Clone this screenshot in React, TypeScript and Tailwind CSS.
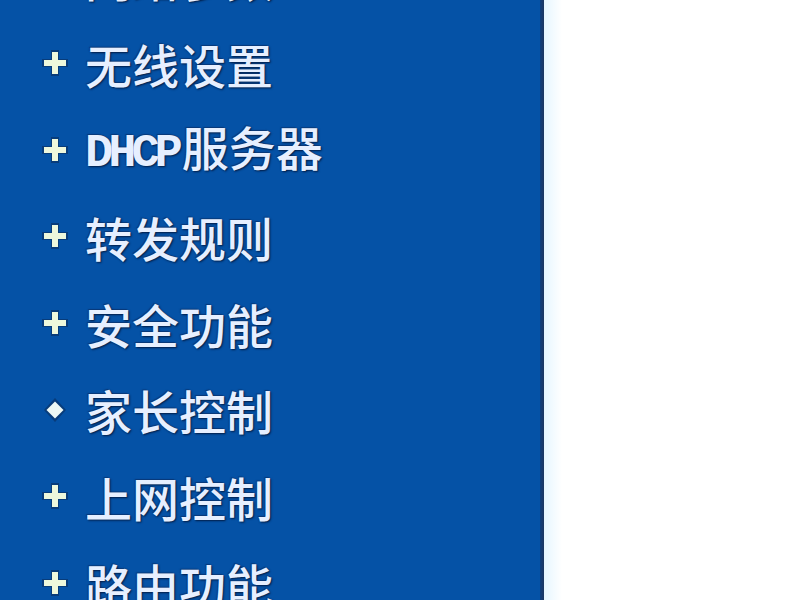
import React from "react";

const items: { label: string; latin?: string; dot?: boolean }[] = [
  { label: "网络参数" },
  { label: "无线设置" },
  { label: "服务器", latin: "DHCP" },
  { label: "转发规则" },
  { label: "安全功能" },
  { label: "家长控制", dot: true },
  { label: "上网控制" },
  { label: "路由功能" },
];

function Plus() {
  return (
    <svg width="30" height="30" viewBox="0 0 30 30" className="shrink-0">
      <path d="M11 2h8v9h9v8h-9v9h-8v-9H2v-8h9z" fill="#0b2a55" opacity="0.55" />
      <path d="M12 4h6v8h8v6h-8v8h-6v-8H4v-6h8z" fill="#eef8dc" />
    </svg>
  );
}

function Dot() {
  return (
    <svg width="30" height="30" viewBox="0 0 30 30" className="shrink-0">
      <path d="M15 3l11 12-11 12L4 15z" fill="#0b2a55" opacity="0.55" />
      <path d="M15 6.5l8.5 8.5-8.5 8.5L6.5 15z" fill="#eef8f4" />
    </svg>
  );
}

export default function App() {
  return (
    <div className="w-[800px] h-[600px] overflow-hidden flex bg-white">
      <div className="w-[540px] h-full bg-[#0552a6] overflow-hidden">
        <ul className="mt-[-67px] pl-[40px] flex flex-col">
          {items.map((it) => (
            <li key={it.label} className="h-[86.7px] flex items-center gap-[15px]">
              {it.dot ? <Dot /> : <Plus />}
              <span
                className="text-[47px] font-medium leading-none text-[#e6efff] [text-shadow:1px_1px_2px_#021c45,-1px_-1px_1px_#0a3a7a]"
                style={{ fontFamily: '"Noto Sans CJK SC", "Noto Sans", sans-serif' }}
              >
                {it.latin && (
                  <span
                    className="font-bold tracking-[-5px] mr-[4px]"
                    style={{ fontFamily: '"Liberation Mono", "Noto Sans CJK SC", monospace' }}
                  >
                    {it.latin}
                  </span>
                )}
                {it.label}
              </span>
            </li>
          ))}
        </ul>
      </div>
      <div className="w-[4px] h-full bg-gradient-to-r from-[#0b3f80] to-[#1c3660]" />
      <div className="w-[18px] h-full bg-gradient-to-r from-[#e6f6ff] to-white" />
      <div className="flex-1 h-full bg-white" />
    </div>
  );
}
